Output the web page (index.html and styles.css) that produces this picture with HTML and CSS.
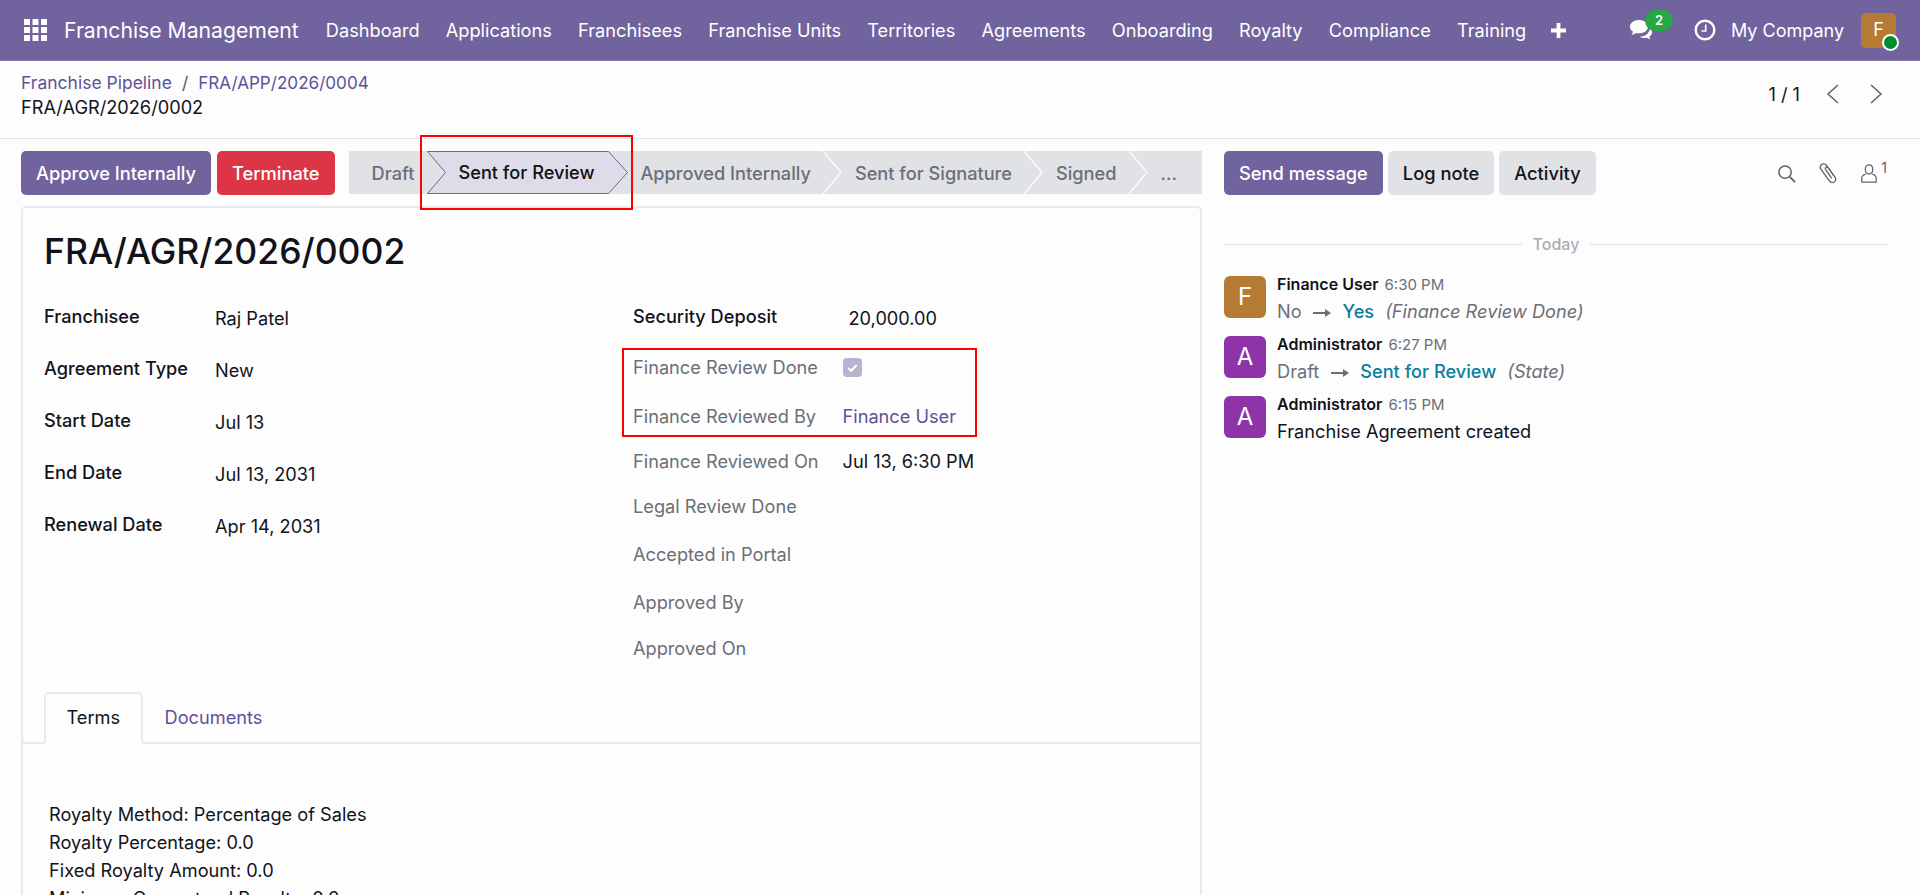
FILE: index.html
```html
<!DOCTYPE html>
<html lang="en">
<head>
  <meta charset="UTF-8">
  <meta name="viewport" content="width=device-width, initial-scale=1.0">
  <title>FRA/AGR/2026/0002</title>
  <link rel="stylesheet" href="styles.css">
</head>
<body>

  <!-- Top navigation -->
  <header class="navbar">
    <svg class="apps-icon" viewBox="0 0 23 22" aria-hidden="true">
      <g fill="#fff">
        <rect x="0" y="0" width="6" height="6"/><rect x="8.5" y="0" width="6" height="6"/><rect x="17" y="0" width="6" height="6"/>
        <rect x="0" y="8" width="6" height="6"/><rect x="8.5" y="8" width="6" height="6"/><rect x="17" y="8" width="6" height="6"/>
        <rect x="0" y="16" width="6" height="6"/><rect x="8.5" y="16" width="6" height="6"/><rect x="17" y="16" width="6" height="6"/>
      </g>
    </svg>
    <div class="brand">Franchise Management</div>
    <nav class="nav-links">
      <a class="nav-link">Dashboard</a>
      <a class="nav-link">Applications</a>
      <a class="nav-link">Franchisees</a>
      <a class="nav-link">Franchise Units</a>
      <a class="nav-link">Territories</a>
      <a class="nav-link">Agreements</a>
      <a class="nav-link">Onboarding</a>
      <a class="nav-link">Royalty</a>
      <a class="nav-link">Compliance</a>
      <a class="nav-link">Training</a>
      <svg class="plus-icon" viewBox="0 0 15 15" aria-hidden="true"><path d="M5.6 0h3.8v5.6H15v3.8H9.4V15H5.6V9.4H0V5.6h5.6z" fill="#fff"/></svg>
    </nav>
    <div class="nav-right">
      <div class="chat-icon">
        <svg viewBox="0 0 24 22" aria-hidden="true">
          <path d="M10 1C4.8 1 1 4 1 7.7c0 2.1 1.2 3.9 3.1 5.1-.3 1.2-1 2.2-1.8 3 1.800-.2 3.300-.9 4.500-1.900.9.2 2 .4 3.200.4 5.200 0 9-3 9-6.600S15.200 1 10 1z" fill="#fff"/>
          <path d="M21 9.500c1.300 1.100 2 2.400 2 3.900 0 1.800-1.100 3.400-2.800 4.400.2 1 .8 1.900 1.500 2.700-1.500-.2-2.800-.8-3.800-1.700-.8.200-1.600.3-2.500.3-1.800 0-3.400-.5-4.600-1.300 4.600-.2 9.300-2.800 10.200-8.300z" fill="#fff"/>
        </svg>
        <span class="chat-badge">2</span>
      </div>
      <svg class="clock-icon" viewBox="0 0 22 22" aria-hidden="true">
        <circle cx="11" cy="11" r="9.300" fill="none" stroke="#fff" stroke-width="2.400"/>
        <path d="M11.700 5.500v6.500H7.500" fill="none" stroke="#fff" stroke-width="1.600"/>
      </svg>
      <span class="company">My Company</span>
      <div class="user-avatar">F<span class="online-dot"></span></div>
    </div>
  </header>

  <!-- Breadcrumb and pager -->
  <div class="control-panel">
    <div class="breadcrumbs">
      <div class="crumb-line"><a class="link">Franchise Pipeline</a><span class="crumb-sep">/</span><a class="link crumb-app">FRA/APP/2026/0004</a></div>
      <div class="crumb-current">FRA/AGR/2026/0002</div>
    </div>
    <div class="pager">
      <span class="pager-count">1 / 1</span>
      <svg class="pager-arrow" viewBox="0 0 14 20" aria-hidden="true"><path d="M12 1 2 10l10 9" fill="none" stroke="#5f636b" stroke-width="1.500"/></svg>
      <svg class="pager-arrow" viewBox="0 0 14 20" aria-hidden="true"><path d="m2 1 10 9-10 9" fill="none" stroke="#5f636b" stroke-width="1.500"/></svg>
    </div>
  </div>

  <div class="content">
    <main class="form-side">
      <div class="action-bar">
        <button class="btn btn-primary">Approve Internally</button>
        <button class="btn btn-danger">Terminate</button>
        <div class="statusbar">
          <span class="stage">Draft</span>
          <div class="stage-current">
            <svg viewBox="0 0 201 43" aria-hidden="true"><path d="M.5.500h181l19 21-19 21H.500l18-21z" fill="#dfdcea" stroke="#71639e"/></svg>
            <span>Sent for Review</span>
          </div>
          <span class="stage">Approved Internally</span>
          <svg class="stage-sep" viewBox="0 0 19 43" aria-hidden="true"><path d="m0 0 18 21.500L0 43" fill="none" stroke="#fff" stroke-width="1.200"/></svg>
          <span class="stage">Sent for Signature</span>
          <svg class="stage-sep" viewBox="0 0 19 43" aria-hidden="true"><path d="m0 0 18 21.500L0 43" fill="none" stroke="#fff" stroke-width="1.200"/></svg>
          <span class="stage">Signed</span>
          <svg class="stage-sep" viewBox="0 0 19 43" aria-hidden="true"><path d="m0 0 18 21.500L0 43" fill="none" stroke="#fff" stroke-width="1.200"/></svg>
          <span class="stage">...</span>
        </div>
      </div>

      <section class="sheet">
        <h1>FRA/AGR/2026/0002</h1>
        <div class="form-columns">
          <div class="form-col-left">
            <div class="field"><label>Franchisee</label><span class="value">Raj Patel</span></div>
            <div class="field"><label>Agreement Type</label><span class="value">New</span></div>
            <div class="field"><label>Start Date</label><span class="value">Jul 13</span></div>
            <div class="field"><label>End Date</label><span class="value">Jul 13, 2031</span></div>
            <div class="field"><label>Renewal Date</label><span class="value">Apr 14, 2031</span></div>
          </div>
          <div class="form-col-right">
            <div class="field field-r row-51"><label>Security Deposit</label><span class="value value-amount">20,000.00</span></div>
            <div class="field field-r row-49"><label class="muted">Finance Review Done</label><span class="checkbox"><svg viewBox="0 0 18 18" aria-hidden="true"><path d="m5 9.500 2.800 2.500L13 6.500" fill="none" stroke="#fff" stroke-width="2"/></svg></span></div>
            <div class="field field-r row-45"><label class="muted">Finance Reviewed By</label><a class="value link">Finance User</a></div>
            <div class="field field-r row-45"><label class="muted">Finance Reviewed On</label><span class="value">Jul 13, 6:30 PM</span></div>
            <div class="field field-r row-48"><label class="muted">Legal Review Done</label></div>
            <div class="field field-r row-48"><label class="muted">Accepted in Portal</label></div>
            <div class="field field-r row-46"><label class="muted">Approved By</label></div>
            <div class="field field-r row-46"><label class="muted">Approved On</label></div>
          </div>
        </div>

        <div class="tabs">
          <a class="tab tab-active">Terms</a>
          <a class="tab link">Documents</a>
        </div>
        <div class="tab-body">
          <p>Royalty Method: Percentage of Sales</p>
          <p>Royalty Percentage: 0.0</p>
          <p>Fixed Royalty Amount: 0.0</p>
          <p>Minimum Guaranteed Royalty: 0.0</p>
        </div>
      </section>
    </main>

    <!-- Chatter -->
    <aside class="chatter">
      <div class="chatter-bar">
        <button class="btn btn-primary">Send message</button>
        <button class="btn btn-light">Log note</button>
        <button class="btn btn-light">Activity</button>
        <div class="chatter-tools">
          <svg class="tool-icon" viewBox="0 0 20 20" aria-hidden="true"><circle cx="8.500" cy="8.500" r="6.500" fill="none" stroke="#5f636b" stroke-width="1.600"/><path d="m13.500 13.500 5.500 5.500" stroke="#5f636b" stroke-width="2"/></svg>
          <svg class="tool-icon clip" viewBox="0 0 20 24" aria-hidden="true"><path d="M15 15 7.500 4.500C6 2.500 3.500 2.500 2.200 4c-1.300 1.300-1 3.300 0 4.700l8 11c1.200 1.700 3.300 2.300 5 1.300 1.700-1.100 2-3.200.8-5L9.500 7C8.800 6 7.700 5.800 7 6.400c-.8.600-.8 1.700-.2 2.600l6 8.300" fill="none" stroke="#5f636b" stroke-width="1.300"/></svg>
          <div class="followers">
            <svg class="person" viewBox="0 0 18 22" aria-hidden="true"><path d="M9 2c2.400 0 3.900 1.800 3.900 4.500S11.400 11.500 9 11.500 5.100 9.200 5.100 6.500 6.600 2 9 2zM5.500 11.500 2.800 13c-.8.500-1.300 1.200-1.300 2.200V20h15v-4.800c0-1-.5-1.700-1.300-2.200l-2.700-1.500" fill="none" stroke="#5f636b" stroke-width="1.300"/></svg>
            <sup>1</sup>
          </div>
        </div>
      </div>

      <div class="date-sep"><span>Today</span></div>

      <div class="message">
        <div class="msg-avatar bg-brown">F</div>
        <div class="msg-body">
          <div class="msg-head"><strong>Finance User</strong><small>6:30 PM</small></div>
          <div class="msg-text"><span class="old">No</span><svg class="arrow" viewBox="0 0 18 10" aria-hidden="true"><path d="M0 4h12V1l6 4-6 4V6H0z" fill="#6b6f76"/></svg><span class="new">Yes</span><em>(Finance Review Done)</em></div>
        </div>
      </div>
      <div class="message">
        <div class="msg-avatar bg-purple">A</div>
        <div class="msg-body">
          <div class="msg-head"><strong>Administrator</strong><small>6:27 PM</small></div>
          <div class="msg-text"><span class="old">Draft</span><svg class="arrow" viewBox="0 0 18 10" aria-hidden="true"><path d="M0 4h12V1l6 4-6 4V6H0z" fill="#6b6f76"/></svg><span class="new">Sent for Review</span><em>(State)</em></div>
        </div>
      </div>
      <div class="message">
        <div class="msg-avatar bg-purple">A</div>
        <div class="msg-body">
          <div class="msg-head"><strong>Administrator</strong><small>6:15 PM</small></div>
          <div class="msg-text">Franchise Agreement created</div>
        </div>
      </div>
    </aside>
  </div>

  <!-- Red annotation boxes drawn on the screenshot -->
  <div class="mark mark-status"></div>
  <div class="mark mark-finance"></div>

</body>
</html>
```

FILE: styles.css
```css
/* Base styles */
* {
  margin: 0;
  padding: 0;
  box-sizing: border-box;
}

html,
body {
  height: 100%;
}

body {
  font-family: Inter, 'Noto Sans', sans-serif;
  font-size: 18.2px;
  background-color: #fdfdfe;
  color: #12131a;
  display: flex;
  flex-direction: column;
  position: relative;
  overflow: hidden;
}

.link {
  color: #5f5297;
}

/* Navbar */
.navbar {
  height: 61px;
  flex: none;
  background-color: #71639e;
  color: #fff;
  display: flex;
  align-items: center;
  padding-left: 24px;
  border-bottom: 1px solid #8a7eb0;
}

.apps-icon {
  width: 23px;
  height: 22px;
  flex: none;
}

.brand {
  font-size: 21.2px;
  margin-left: 17px;
  margin-right: 14px;
  white-space: nowrap;
}

.nav-links {
  display: flex;
  align-items: center;
}

.nav-link {
  padding: 0 13.100px;
  white-space: nowrap;
}

.plus-icon {
  width: 15px;
  height: 15px;
  margin-left: 12px;
}

.nav-right {
  margin-left: auto;
  display: flex;
  align-items: center;
  padding-right: 24px;
}

.chat-icon {
  position: relative;
  width: 24px;
  height: 22px;
  margin-right: 41px;
}

.chat-icon svg {
  display: block;
  width: 24px;
  height: 22px;
}

.chat-badge {
  position: absolute;
  top: -9px;
  left: 16px;
  width: 28px;
  height: 21px;
  border-radius: 11px;
  background-color: #28a745;
  font-size: 13px;
  font-weight: 600;
  line-height: 21px;
  text-align: center;
}

.clock-icon {
  width: 22px;
  height: 22px;
  margin-right: 15px;
}

.company {
  font-size: 18px;
  white-space: nowrap;
  margin-right: 17px;
}

.user-avatar {
  position: relative;
  width: 35px;
  height: 35px;
  border-radius: 5px;
  background-color: #b57a33;
  font-size: 18px;
  line-height: 33px;
  text-align: center;
}

.online-dot {
  position: absolute;
  right: -3px;
  bottom: -3px;
  width: 17px;
  height: 17px;
  border-radius: 50%;
  background-color: #008a2e;
  border: 2px solid #fff;
}

/* Breadcrumb row */
.control-panel {
  height: 78px;
  flex: none;
  border-bottom: 1px solid #e2e4e8;
  display: flex;
  justify-content: space-between;
  padding: 10px 37px 0 21px;
}

.crumb-line {
  line-height: 24px;
  font-size: 17.5px;
}

.crumb-app {
  font-size: 17.1px;
}

.crumb-sep {
  margin: 0 10px;
  color: #555;
}

.crumb-current {
  line-height: 24px;
}

.pager {
  display: flex;
  align-items: center;
  height: 45px;
}

.pager-count {
  margin-right: 26px;
}

.pager-arrow {
  width: 14px;
  height: 20px;
}

.pager-arrow + .pager-arrow {
  margin-left: 29px;
}

/* Form side */
.content {
  flex: 1;
  display: flex;
  min-height: 0;
}

.form-side {
  width: 1202px;
  flex: none;
  padding: 12px 0 0 21px;
}

.action-bar {
  display: flex;
  height: 44px;
  margin-bottom: 11px;
}

.btn {
  height: 44px;
  border: none;
  border-radius: 5px;
  padding: 0 15px;
  font: 500 18.3px Inter, 'Noto Sans', sans-serif;
  white-space: nowrap;
}

.btn-primary {
  background-color: #71639e;
  color: #fff;
}

.btn-danger {
  background-color: #dc3545;
  color: #fff;
  margin-left: 6px;
}

.btn-light {
  background-color: #e0e2e6;
  color: #12131a;
  margin-left: 5px;
}

.statusbar {
  flex: 1;
  height: 43px;
  margin-left: 14px;
  background-color: #e0e2e6;
  display: flex;
  align-items: center;
  padding-left: 23px;
  color: #6b6f76;
  font-weight: 500;
}

.stage {
  white-space: nowrap;
}

.stage-current {
  position: relative;
  width: 201px;
  height: 43px;
  margin: 0 12px 0 13px;
  color: #111;
  flex: none;
}

.stage-current svg {
  display: block;
  width: 201px;
  height: 43px;
}

.stage-current span {
  position: absolute;
  left: 31px;
  top: 0;
  line-height: 43px;
  white-space: nowrap;
}

.stage-sep {
  width: 19px;
  height: 43px;
  flex: none;
  margin: 0 12.500px;
}

/* Sheet */
.sheet {
  border: 2px solid #e7e9ed;
  border-bottom: none;
  border-radius: 5px 5px 0 0;
  height: 800px;
  padding-top: 22px;
}

h1 {
  font-size: 35.5px;
  font-weight: 500;
  line-height: 44px;
  padding-left: 21px;
}

.form-columns {
  display: flex;
  margin-top: 30px;
  padding-left: 21px;
}

.form-col-left {
  width: 589px;
}

.field {
  display: flex;
  height: 52px;
}

.field label {
  width: 171px;
  font-weight: 500;
  line-height: 24px;
  flex: none;
}

.value {
  line-height: 28px;
  white-space: nowrap;
}

.field-r label {
  width: 209.500px;
}

.muted {
  color: #6b6f76;
  font-weight: 400 !important;
}

.value-amount {
  margin-left: 6px;
}

.row-51 {
  height: 51px;
}

.row-49 {
  height: 49px;
}

.row-48 {
  height: 48px;
}

.row-46 {
  height: 46px;
}

.row-45 {
  height: 45px;
}

.field-r .link,
.field-r .value {
  line-height: 24px;
}

.field-r .value-amount {
  line-height: 28px;
}

.checkbox {
  width: 19px;
  height: 19px;
  margin-top: 3px;
  border-radius: 4px;
  background-color: #b9b3d0;
  flex: none;
}

.checkbox svg {
  display: block;
  width: 19px;
  height: 19px;
}

/* Tabs */
.tabs {
  display: flex;
  margin-top: 10px;
  height: 52px;
  padding-left: 21px;
  border-bottom: 2px solid #e7e9ed;
}

.tab {
  height: 52px;
  line-height: 50px;
  padding: 0 22px;
}

.tab-active {
  padding: 0 20.500px;
  line-height: 46px;
  border: 2px solid #e7e9ed;
  border-bottom: 2px solid #fdfdfe;
  border-radius: 5px 5px 0 0;
  background-color: #fdfdfe;
}

.tab-body {
  padding: 56px 26px 0;
  line-height: 28px;
}

/* Chatter */
.chatter {
  flex: 1;
  min-width: 0;
  padding: 12px 32px 0 22px;
}

.chatter-bar {
  display: flex;
  align-items: center;
  height: 44px;
}

.chatter-tools {
  margin-left: auto;
  display: flex;
  align-items: center;
}

.tool-icon {
  width: 19px;
  height: 19px;
  display: block;
}

.clip {
  width: 20px;
  height: 24px;
  margin-left: 23px;
}

.person {
  width: 18px;
  height: 21px;
  display: block;
}

.followers {
  display: flex;
  align-items: center;
  margin-left: 21px;
}

.followers sup {
  font-size: 14px;
  color: #5f636b;
  margin-left: 3px;
  margin-top: -12px;
  margin-right: 1px;
}

.date-sep {
  display: flex;
  align-items: center;
  margin-top: 37px;
  height: 24px;
  color: #a9adb4;
  font-size: 16px;
  font-weight: 500;
}

.date-sep::before,
.date-sep::after {
  content: '';
  flex: 1;
  height: 1px;
  background-color: #dcdfe4;
}

.date-sep span {
  padding: 0 11px;
}

.message {
  display: flex;
  height: 60px;
}

.date-sep + .message {
  margin-top: 20px;
}

.msg-avatar {
  width: 42px;
  height: 42px;
  flex: none;
  border-radius: 6px;
  color: #fff;
  font-size: 24px;
  line-height: 42px;
  text-align: center;
}

.bg-brown {
  background-color: #b57a33;
}

.bg-purple {
  background-color: #8e33a8;
}

.msg-body {
  margin-left: 11px;
  margin-top: -1px;
}

.msg-head {
  line-height: 16px;
}

.msg-head strong {
  font-size: 16px;
  font-weight: 600;
}

.msg-head small {
  font-size: 15px;
  color: #6b6f76;
  margin-left: 6px;
}

.msg-text {
  margin-top: 6px;
  line-height: 24px;
  white-space: nowrap;
}

.old {
  color: #6b6f76;
}

.arrow {
  width: 18px;
  height: 10px;
  margin: 0 11.500px;
}

.new {
  color: #0b7f9d;
  font-weight: 500;
}

.msg-text em {
  color: #6b6f76;
  margin-left: 11px;
}

/* Red annotation boxes */
.mark {
  position: absolute;
  border: 2px solid #f00;
}

.mark-status {
  left: 420px;
  top: 135px;
  width: 213px;
  height: 75px;
}

.mark-finance {
  left: 622px;
  top: 348px;
  width: 355px;
  height: 89px;
}
```
